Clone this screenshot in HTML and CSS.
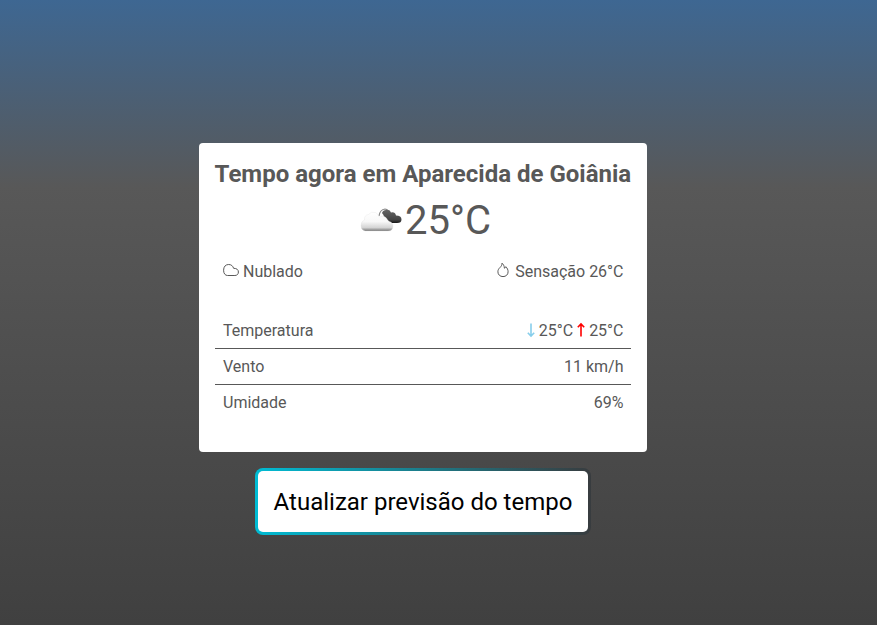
FILE: index.html
```html
<!DOCTYPE html>
<html lang="pt-BR">
<head>
<meta charset="utf-8">
<title>Tempo agora</title>
<link rel="stylesheet" href="styles.css">
</head>
<body>
<main class="page">
  <section class="card">
    <h1 class="title">Tempo agora em Aparecida de Goiânia</h1>
    <div class="now">
      <svg class="weather" width="50" height="50" viewBox="0 0 50 50">
        <defs>
          <linearGradient id="light" x1="0" y1="0" x2="0" y2="1"><stop offset="0" stop-color="#fff"/><stop offset=".5" stop-color="#f8f8f8"/><stop offset=".82" stop-color="#d4d4d4"/><stop offset="1" stop-color="#777"/></linearGradient>
          <linearGradient id="dark" x1="0" y1="0" x2="0" y2="1"><stop offset="0" stop-color="#666"/><stop offset=".75" stop-color="#444"/><stop offset="1" stop-color="#171717"/></linearGradient>
        </defs>
        <path d="M24 20Q25 13.500 30 13Q32 13 33 15" fill="none" stroke="#888" stroke-width="1.2"/>
        <path d="M27 17Q28 14 31 14Q35 13 36 16.500Q40 15.500 41 19.500Q46.500 19.500 46.500 23.500Q46.500 27 42 27H37Q34 27 33 24Q30 24 29 21Q29 19 27 17Z" fill="url(#dark)"/>
        <path d="M10 35Q6 34 6 29.500Q6 25 9.500 24Q9 19 13.500 18.500Q16 15 20.500 16.500Q23.500 18 24 21Q31 18.500 33 25Q38 26 38 30Q38 35 33 35Z" fill="url(#light)" stroke="#ddd" stroke-width=".3"/>
      </svg>
      <span class="degrees">25°C</span>
    </div>
    <div class="row conditions">
      <span><svg class="icon cloud" width="16" height="16" viewBox="0 0 16 16"><path d="M4.600 13.500C2.200 13.500.6 11.600.6 8.200.6 4.500 2.700 2.500 5.700 2.500 8.300 2.500 9.900 4 10.600 6.300 13.700 6.300 15.400 7.700 15.400 10 15.400 12.200 14 13.500 11.900 13.500Z"/></svg>Nublado</span>
      <span><svg class="icon flame" width="16" height="16" viewBox="0 0 16 16"><path d="M7 1.200C8.400 2.300 9.300 4 9.400 6.200 10.200 5.900 10.600 5.400 10.800 4.700 12.300 6.100 13.100 7.900 13.100 9.800 13.100 12.700 10.900 14.600 8 14.600S2.900 12.700 2.900 9.800C2.900 7.800 3.800 6.700 5 5.500 6.200 4.300 7 3.200 7 1.200Z"/></svg>Sensação 26°C</span>
    </div>
    <div class="details">
      <div class="row"><span>Temperatura</span><span class="range"><svg class="arrow low" width="16" height="16" viewBox="0 0 16 16"><path d="M8 1.500V14M4.800 10.800 8 14 11.200 10.800"/></svg>25°C<svg class="arrow high" width="16" height="16" viewBox="0 0 16 16"><path d="M8 14.500V2M4.800 5.200 8 2 11.200 5.200"/></svg>25°C</span></div>
      <div class="row"><span>Vento</span><span>11 km/h</span></div>
      <div class="row"><span>Umidade</span><span>69%</span></div>
    </div>
  </section>
  <button class="refresh">Atualizar previsão do tempo</button>
</main>
</body>
</html>
```

FILE: styles.css
```css
* { box-sizing: border-box; }
body {
  margin: 0;
  height: 625px;
  overflow: hidden;
  color: #585858;
  font: 16px/19px Roboto, sans-serif;
  background: linear-gradient(#3e6792 0%, #585858 30%, #404040 100%);
}
.page {
  width: 846px;
  padding-top: 143px;
  display: flex;
  flex-direction: column;
  align-items: center;
  gap: 16px;
}
.card {
  width: 448px;
  height: 309px;
  padding: 16px;
  border-radius: 4px;
  background: #fff;
}
.title { margin: 0 0 0 -0.4px; font-size: 24px; line-height: 31px; font-weight: 700; white-space: nowrap; text-align: center; }
.now { display: flex; justify-content: center; align-items: center; height: 64px; padding-bottom: 2px; }
.weather { flex: none; margin-bottom: 1px; }
.degrees { font-size: 40px; line-height: 48px; }
.row { display: flex; justify-content: space-between; padding: 8px 7.5px 8px 8px; }
.row > span { display: flex; align-items: center; }
.icon { fill: none; stroke: #585858; stroke-width: 1; margin: 0 4px 3px 0; }
.details { margin-top: 24px; }
.details .row { height: 36px; border-bottom: 1px solid #585858; }
.details .row:last-child { height: 35px; border-bottom: 0; }
.arrow { fill: none; stroke-width: 1.6; margin-bottom: 1px; }
.low { stroke: #87ceeb; }
.high { stroke: #f00; }
.refresh {
  width: 336px;
  height: 67px;
  padding: 2px 0 0;
  border: 3px solid transparent;
  border-radius: 8px;
  color: #000;
  font: 24px/29px Roboto, sans-serif;
  background: linear-gradient(#fff, #fff) padding-box, linear-gradient(to right, #00bcd4, #383c3f) border-box;
}
```
